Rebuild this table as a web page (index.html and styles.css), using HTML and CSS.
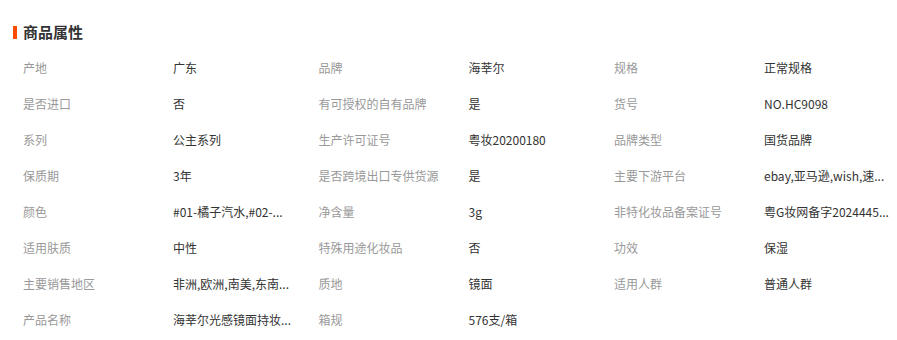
FILE: index.html
```html
<!DOCTYPE html>
<html lang="zh-CN">
<head>
<meta charset="utf-8">
<title>商品属性</title>
<link rel="stylesheet" href="styles.css">
</head>
<body>
<section class="attrs">
  <h3 class="attrs-title"><span class="attrs-bar"></span>商品属性</h3>
  <div class="attrs-grid">
    <div class="k">产地</div><div class="v">广东</div>
    <div class="k">品牌</div><div class="v">海莘尔</div>
    <div class="k">规格</div><div class="v">正常规格</div>

    <div class="k">是否进口</div><div class="v">否</div>
    <div class="k">有可授权的自有品牌</div><div class="v">是</div>
    <div class="k">货号</div><div class="v">NO.HC9098</div>

    <div class="k">系列</div><div class="v">公主系列</div>
    <div class="k">生产许可证号</div><div class="v">粤妆20200180</div>
    <div class="k">品牌类型</div><div class="v">国货品牌</div>

    <div class="k">保质期</div><div class="v">3年</div>
    <div class="k">是否跨境出口专供货源</div><div class="v">是</div>
    <div class="k">主要下游平台</div><div class="v" title="ebay,亚马逊,wish,速卖通">ebay,亚马逊,wish,速...</div>

    <div class="k">颜色</div><div class="v" title="#01-橘子汽水,#02-蜜桃乌龙">#01-橘子汽水,#02-...</div>
    <div class="k">净含量</div><div class="v">3g</div>
    <div class="k">非特化妆品备案证号</div><div class="v" title="粤G妆网备字2024445">粤G妆网备字2024445...</div>

    <div class="k">适用肤质</div><div class="v">中性</div>
    <div class="k">特殊用途化妆品</div><div class="v">否</div>
    <div class="k">功效</div><div class="v">保湿</div>

    <div class="k">主要销售地区</div><div class="v" title="非洲,欧洲,南美,东南亚">非洲,欧洲,南美,东南...</div>
    <div class="k">质地</div><div class="v">镜面</div>
    <div class="k">适用人群</div><div class="v">普通人群</div>

    <div class="k">产品名称</div><div class="v" title="海莘尔光感镜面持妆">海莘尔光感镜面持妆...</div>
    <div class="k">箱规</div><div class="v">576支/箱</div>
    <div class="k"></div><div class="v"></div>
  </div>
</section>
</body>
</html>
```

FILE: styles.css
```css
html, body {
  margin: 0;
  padding: 0;
  background: #fff;
}
body {
  font-family: "Microsoft YaHei", "Noto Sans CJK SC", "Noto Sans", sans-serif;
  font-size: 12px;
  color: #333;
  width: 897px;
  height: 340px;
  overflow: hidden;
}
.attrs {
  padding: 22px 0 0 13px;
}
.attrs-title {
  display: flex;
  align-items: center;
  margin: 0 0 8px;
  height: 20px;
  line-height: 20px;
  font-size: 15px;
  font-weight: bold;
  color: #333;
}
.attrs-bar {
  width: 4px;
  height: 13px;
  background: #ff4a00;
  margin-right: 6px;
}
.attrs-grid {
  display: grid;
  grid-template-columns: 150px 145.5px 150px 145.5px 150px 145.5px;
  grid-auto-rows: 36px;
  padding-left: 10px;
}
.k, .v {
  line-height: 36px;
  white-space: nowrap;
}
.k {
  color: #999;
}
.v {
  color: #333;
}
```
